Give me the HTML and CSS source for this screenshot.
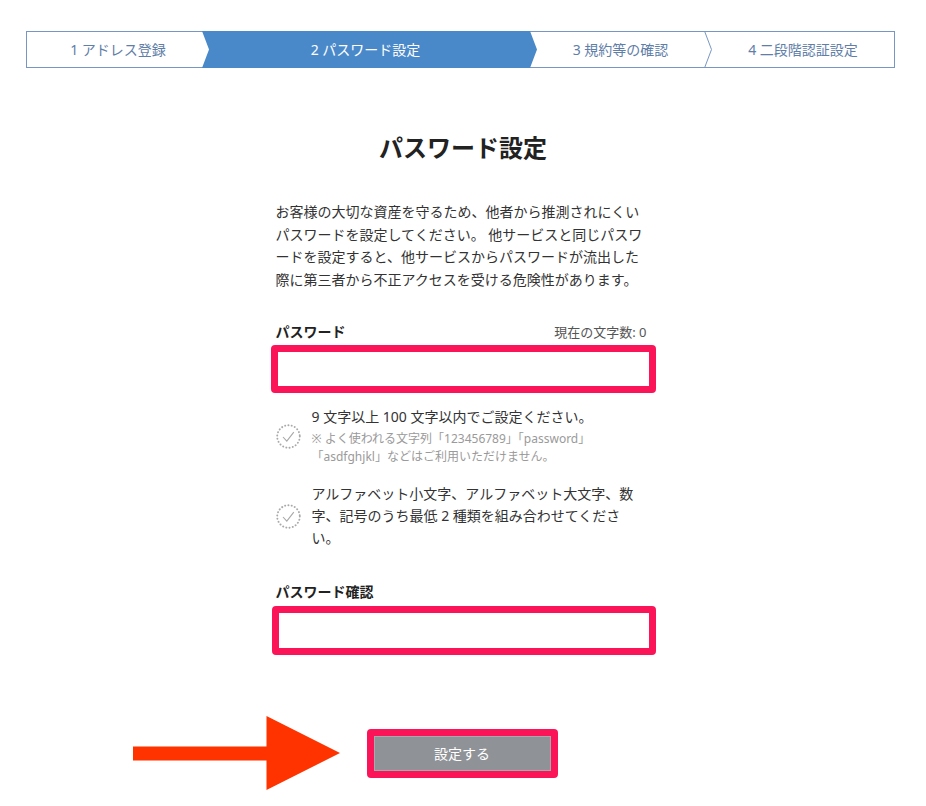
FILE: index.html
```html
<!DOCTYPE html>
<html lang="ja">
<head>
    <meta charset="UTF-8">
    <meta name="viewport" content="width=device-width, initial-scale=1.0">
    <title>パスワード設定</title>
    <link rel="stylesheet" href="styles.css">
</head>
<body>
<div class="page">

    <!-- Progress steps -->
    <div class="stepper">
        <div class="step step-done">1 アドレス登録</div>
        <div class="step step-current">2 パスワード設定</div>
        <div class="step step-next">3 規約等の確認</div>
        <svg class="step-sep" viewBox="0 0 8 37" preserveAspectRatio="none">
            <polyline points="0.5,0 7.5,18.5 0.5,37" fill="none" stroke="#7896c2" stroke-width="1"/>
        </svg>
        <div class="step step-last">4 二段階認証設定</div>
    </div>

    <main class="form">
        <h1 class="form-title">パスワード設定</h1>

        <p class="form-lead">お客様の大切な資産を守るため、他者から推測されにくいパスワードを設定してください。 他サービスと同じパスワードを設定すると、他サービスからパスワードが流出した際に第三者から不正アクセスを受ける危険性があります。</p>

        <div class="field">
            <div class="field-head">
                <label for="password">パスワード</label>
                <span class="field-count">現在の文字数: 0</span>
            </div>
            <input class="field-input" type="password" id="password">
        </div>

        <ul class="rules">
            <li class="rule">
                <svg class="rule-icon" viewBox="0 0 25 25">
                    <circle cx="12.5" cy="12.5" r="11.3" fill="none" stroke="#a9a9a9" stroke-width="1.9" stroke-linecap="round" stroke-dasharray="0.1 3.2"/>
                    <polyline points="7,13 10.8,17.2 17.8,8.2" fill="none" stroke="#a8a8a8" stroke-width="1.1"/>
                </svg>
                <div class="rule-body">
                    <p class="rule-text">9 文字以上 100 文字以内でご設定ください。</p>
                    <p class="rule-note">※ よく使われる文字列「123456789」「password」「asdfghjkl」などはご利用いただけません。</p>
                </div>
            </li>
            <li class="rule">
                <svg class="rule-icon" viewBox="0 0 25 25">
                    <circle cx="12.5" cy="12.5" r="11.3" fill="none" stroke="#a9a9a9" stroke-width="1.9" stroke-linecap="round" stroke-dasharray="0.1 3.2"/>
                    <polyline points="7,13 10.8,17.2 17.8,8.2" fill="none" stroke="#a8a8a8" stroke-width="1.1"/>
                </svg>
                <div class="rule-body">
                    <p class="rule-text">アルファベット小文字、アルファベット大文字、数字、記号のうち最低 2 種類を組み合わせてください。</p>
                </div>
            </li>
        </ul>

        <div class="field field-confirm">
            <div class="field-head">
                <label for="password-confirm">パスワード確認</label>
            </div>
            <input class="field-input field-input-tall" type="password" id="password-confirm">
        </div>

        <div class="actions">
            <button class="submit" type="button">設定する</button>
        </div>
    </main>

    <!-- Red arrow pointing at the button -->
    <svg class="hint-arrow" viewBox="0 0 208 75">
        <polygon points="0,30.5 133.5,30.5 133.5,0 207,37 133.5,74 133.5,44.5 0,44.5" fill="#ff3300"/>
    </svg>

</div>
</body>
</html>
```

FILE: styles.css
```css
/* Basic Reset */
* {
    margin: 0;
    padding: 0;
    box-sizing: border-box;
}

body {
    font-family: "Noto Sans", "Noto Sans CJK JP", sans-serif;
    background: #fff;
    color: #333;
}

.page {
    position: relative;
    min-height: 806px;
    padding-top: 31px;
}

/* Progress steps */
.stepper {
    display: flex;
    height: 37px;
    margin: 0 31px 0 26px;
    border: 1px solid #7896c2;
    font-size: 14px;
    line-height: 35px;
    color: #5f7ea8;
}

.step {
    text-align: center;
    white-space: nowrap;
}

.step-done {
    width: 175px;
    padding-left: 7px;
}

.step-current {
    width: 335px;
    margin: -1px 0;
    line-height: 37px;
    padding-right: 8px;
    background: #4a89c9;
    color: #fff;
    clip-path: polygon(0 0, 328px 0, 100% 50%, 328px 100%, 0 100%, 7px 50%);
}

.step-next {
    width: 167px;
}

.step-sep {
    width: 8px;
    height: 37px;
    margin: -1px 0;
    flex: none;
}

.step-last {
    flex: 1;
}

/* Form column */
.form {
    width: 385px;
    margin: 0 auto;
}

.form-title {
    margin-top: 64px;
    font-size: 24px;
    line-height: 32px;
    font-weight: bold;
    color: #222;
    text-align: center;
}

.form-lead {
    width: 372px;
    margin: 37px 0 0 5px;
    font-size: 14px;
    line-height: 22.5px;
    color: #333;
}

.field {
    margin-top: 31px;
}

.field-head {
    display: flex;
    justify-content: space-between;
    align-items: baseline;
    padding: 0 9px 0 5px;
    line-height: 20px;
}

.field-head label {
    font-size: 14px;
    font-weight: bold;
    color: #222;
}

.field-count {
    font-size: 13px;
    color: #555;
}

.field-input {
    display: block;
    width: 100%;
    height: 48px;
    margin-top: 3px;
    border: 7px solid #fc1458;
    border-radius: 4px;
    background: #fff;
    outline: none;
    padding: 0 10px;
    font-size: 14px;
}

.field-input-tall {
    height: 49px;
    margin-top: 4px;
    margin-left: 1px;
    width: 384px;
}

/* Password rules */
.rules {
    list-style: none;
    margin-top: 13px;
}

.rule {
    display: flex;
    align-items: center;
    gap: 11px;
    padding-left: 5px;
}

.rule + .rule {
    margin-top: 17px;
}

.rule-icon {
    width: 25px;
    height: 25px;
    flex: none;
}

.rule-body {
    width: 330px;
}

.rule-text {
    font-size: 14px;
    line-height: 22px;
    color: #333;
}

.rule-note {
    margin-top: 2px;
    font-size: 12px;
    line-height: 18px;
    color: #9a9a9a;
}

.field-confirm {
    margin-top: 33px;
}

/* Submit button */
.actions {
    margin-top: 74px;
    text-align: center;
}

.submit {
    width: 191px;
    height: 49px;
    margin-left: -2px;
    border: 7px solid #fc1458;
    border-radius: 4px;
    background: #8f9398;
    box-shadow: inset 0 0 0 1px #a6a9ae;
    color: #fff;
    font-family: inherit;
    font-size: 14px;
    line-height: 33px;
    cursor: pointer;
}

/* Annotation arrow */
.hint-arrow {
    position: absolute;
    left: 133px;
    top: 716px;
    width: 208px;
    height: 75px;
}
```
